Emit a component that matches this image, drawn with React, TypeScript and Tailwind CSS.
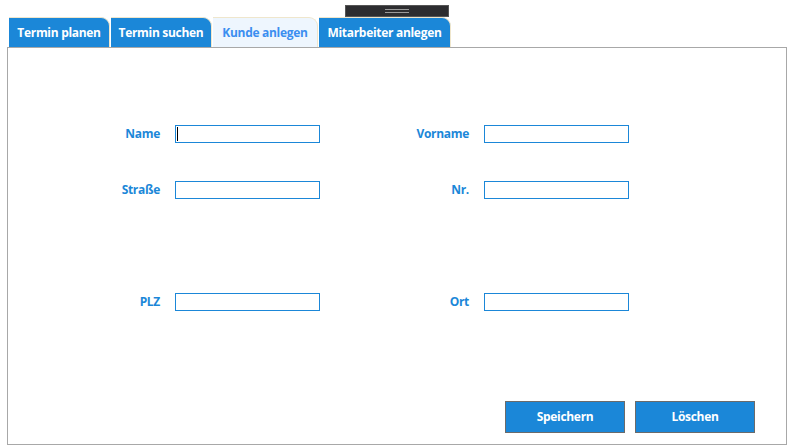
import React from 'react';

const tabs = [
  { label: 'Termin planen', width: 'w-[101px]' },
  { label: 'Termin suchen', width: 'w-[101px]' },
  { label: 'Kunde anlegen', width: 'w-[105px]', active: true },
  { label: 'Mitarbeiter anlegen', width: 'w-[132px]' },
];

function Field({ label, caret }: { label: string; caret?: boolean }) {
  return (
    <>
      <label className="pr-[15px] text-right text-[12px] font-bold leading-[18px] tracking-[-0.3px] text-[#1b87d8]">
        {label}
      </label>
      <div className="relative h-[18px] w-[145px]">
        <input
          type="text"
          className="block h-[18px] w-[145px] border border-[#1b87d8] bg-white outline-none"
        />
        {caret && <span className="absolute left-[2px] top-[2px] h-[14px] w-px bg-black" />}
      </div>
    </>
  );
}

export default function App() {
  return (
    <div
      className="relative h-[448px] w-[797px] bg-white"
      style={{ fontFamily: '"Open Sans", "Noto Sans", sans-serif' }}
    >
      {/* drag handle */}
      <div className="absolute left-[345px] top-[5px] flex h-[12px] w-[104px] items-center justify-center border border-[#555] bg-[#2d2d30]">
        <div className="flex w-[24px] flex-col gap-[2px]">
          <div className="h-px bg-[#9a9a9a]" />
          <div className="h-px bg-[#9a9a9a]" />
        </div>
      </div>

      {/* Tabs */}
      <div className="flex gap-px pl-[9px] pt-[17px]">
        {tabs.map((t) => (
          <div
            key={t.label}
            className={`flex h-[30px] items-center justify-center rounded-tr-[9px] border-t border-r border-[#efe6cc] text-[12px] font-bold tracking-[-0.3px] ${t.width} ${
              t.active ? 'bg-[#eef6fe] text-[#3b8ef0]' : 'bg-[#1b87d8] text-white'
            }`}
          >
            {t.label}
          </div>
        ))}
      </div>

      {/* Panel */}
      <div className="ml-[7px] flex h-[398px] w-[780px] flex-col border border-[#a8a8a8] bg-white">
        <div className="grid grid-cols-[167px_145px_164px_145px] items-center gap-y-[38px] pt-[77px]">
          <Field label="Name" caret />
          <Field label="Vorname" />
          <Field label="Straße" />
          <Field label="Nr." />
        </div>
        <div className="grid grid-cols-[167px_145px_164px_145px] items-center pt-[94px]">
          <Field label="PLZ" />
          <Field label="Ort" />
        </div>
        <div className="mt-auto flex justify-end gap-[10px] pb-[11px] pr-[31px]">
          <button className="h-[32px] w-[120px] border border-[#6b6b6b] bg-[#1b87d8] text-[12px] font-bold tracking-[-0.3px] text-white">
            Speichern
          </button>
          <button className="h-[32px] w-[120px] border border-[#6b6b6b] bg-[#1b87d8] text-[12px] font-bold tracking-[-0.3px] text-white">
            Löschen
          </button>
        </div>
      </div>
    </div>
  );
}
